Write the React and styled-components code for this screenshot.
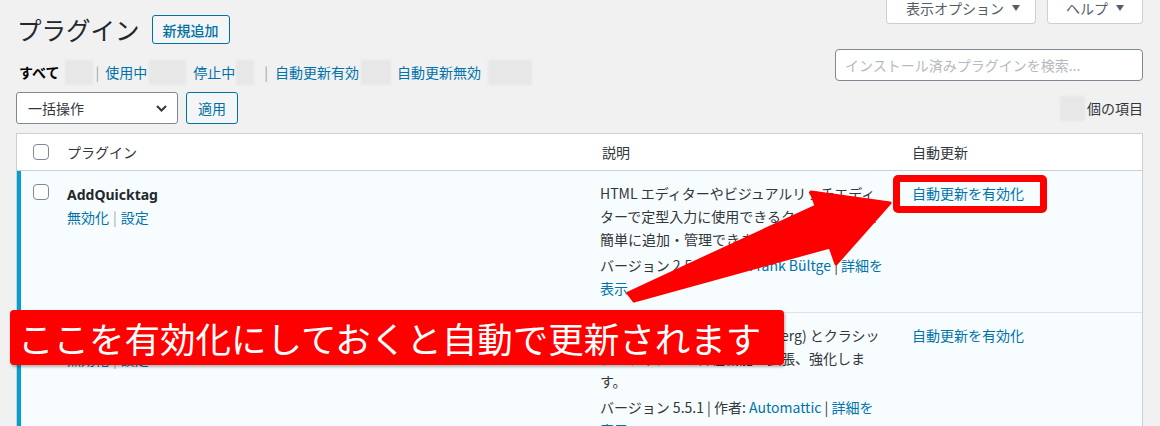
import React from "react";
import styled, { createGlobalStyle } from "styled-components";

const GlobalStyle = createGlobalStyle`
  html, body { margin: 0; padding: 0; background: #f1f1f1; }
  body {
    font-family: "Noto Sans", "Noto Sans CJK JP", sans-serif;
    font-size: 14px;
    color: #32373c;
  }
  * { box-sizing: border-box; }
`;

const Page = styled.div`
  position: relative;
  width: 1160px;
  height: 426px;
  overflow: hidden;
  padding: 0 17px 0 16px;
`;

const Top = styled.div`
  display: flex;
  justify-content: space-between;
  align-items: flex-start;
`;

const Left = styled.div`
  padding-top: 15px;
`;

const TitleRow = styled.div`
  display: flex;
  align-items: center;
  gap: 12px;
  height: 29px;
`;

const Title = styled.h1`
  margin: 0 0 0 1px;
  font-family: "Noto Sans CJK JP", sans-serif;
  font-size: 24.5px;
  font-weight: 400;
  line-height: 29px;
  color: #23282d;
`;

const OutlineButton = styled.button`
  height: ${(p) => p.$h || 29}px;
  padding: 0 ${(p) => p.$px || 10}px;
  border: 1px solid #0071a1;
  border-radius: 3px;
  background: #f3f5f6;
  color: #0071a1;
  font-family: "Noto Sans CJK JP", sans-serif;
  font-size: 14px;
  font-weight: ${(p) => p.$weight || 400};
  line-height: 1;
  display: inline-flex;
  align-items: center;
  cursor: pointer;
`;

const Filters = styled.div`
  display: flex;
  align-items: center;
  height: 20px;
  margin-top: 18px;
  padding-left: 3px;
  font-family: "Noto Sans CJK JP", sans-serif;
  font-size: 14px;
  line-height: 20px;
`;

const FilterLink = styled.a`
  margin-left: ${(p) => p.$ml || 0}px;
  color: ${(p) => (p.$current ? "#000" : "#0073aa")};
  font-weight: ${(p) => (p.$current ? 700 : 400)};
  text-decoration: none;
  white-space: nowrap;
`;

const Sep = styled.span`
  margin-left: ${(p) => p.$ml || 0}px;
  color: #a0a5aa;
`;

const Blur = styled.span`
  display: inline-block;
  width: ${(p) => p.$w}px;
  height: 25px;
  margin-left: ${(p) => p.$ml || 0}px;
  background: #e7e7e8;
  filter: blur(1px);
`;

const Right = styled.div`
  width: 308px;
  display: flex;
  flex-direction: column;
  align-items: flex-end;
`;

const ScreenMeta = styled.div`
  display: flex;
  gap: 11px;
`;

const MetaButton = styled.button`
  width: ${(p) => p.$w}px;
  height: 24px;
  padding: 0 0 8px ${(p) => p.$pl}px;
  display: flex;
  align-items: center;
  gap: 8px;
  background: #fff;
  border: 1px solid #ccd0d4;
  border-top: none;
  border-radius: 0 0 4px 4px;
  color: #555d66;
  font-family: "Noto Sans CJK JP", sans-serif;
  font-size: 14px;
  line-height: 16px;
`;

const Tri = styled.span`
  width: 0;
  height: 0;
  border-left: 4.5px solid transparent;
  border-right: 4.5px solid transparent;
  border-top: 6px solid #555d66;
`;

const Search = styled.input`
  width: 308px;
  height: 32px;
  margin-top: 25px;
  padding: 0 9px;
  border: 1px solid #7e8993;
  border-radius: 4px;
  background: #fff;
  font-family: "Noto Sans CJK JP", sans-serif;
  font-size: 14px;
  &::placeholder { color: #b6babf; }
`;

const Toolbar = styled.div`
  display: flex;
  justify-content: space-between;
  align-items: center;
  height: 32px;
  margin-top: 10px;
`;

const Group = styled.div`
  display: flex;
  align-items: center;
  gap: ${(p) => p.$gap || 0}px;
`;

const Select = styled.div`
  width: 162px;
  height: 32px;
  padding: 0 10px 0 11px;
  display: flex;
  align-items: center;
  justify-content: space-between;
  background: #fff;
  border: 1px solid #7e8993;
  border-radius: 3px;
  font-family: "Noto Sans CJK JP", sans-serif;
  font-size: 14px;
  color: #32373c;
`;

const Count = styled.span`
  font-family: "Noto Sans CJK JP", sans-serif;
  font-size: 14px;
  color: #32373c;
`;

const Table = styled.div`
  margin-top: 9px;
  border: 1px solid #ccd0d4;
  background: #fff;
`;

const HeadRow = styled.div`
  display: grid;
  grid-template-columns: 40px 533px 312px 1fr;
  align-items: center;
  height: 37px;
  border-bottom: 1px solid #ccd0d4;
  font-family: "Noto Sans CJK JP", sans-serif;
  font-size: 14px;
  color: #32373c;
`;

const HeadCell = styled.div`
  padding-left: ${(p) => p.$pl ?? 10}px;
  display: flex;
  align-items: center;
`;

const Row = styled.div`
  display: grid;
  grid-template-columns: 40px 533px 312px 1fr;
  background: #f7fcfe;
  border-bottom: 1px solid #e1e2e4;
`;

const CheckCell = styled.div`
  padding: 13px 0 0 16px;
  box-shadow: ${(p) => (p.$active ? "inset 4px 0 0 #00a0d2" : "none")};
`;

const Cell = styled.div`
  padding: 11px 10px 12px 10px;
  font-family: "Noto Sans CJK JP", sans-serif;
  font-size: 14px;
  line-height: 23px;
`;

const Box = styled.span`
  display: block;
  width: 16px;
  height: 16px;
  border: 1px solid #7e8993;
  border-radius: 4px;
  background: #fff;
`;

const PluginName = styled.strong`
  display: block;
  font-family: "Noto Sans", "Noto Sans CJK JP", sans-serif;
  font-weight: 700;
  color: #23282d;
  padding-top: 1px;
`;

const Actions = styled.div`
  color: #0073aa;
  font-size: 14px;
`;

const Link = styled.a`
  color: #0073aa;
  text-decoration: none;
`;

const Pipe = styled.span`
  color: #a0a5aa;
  margin: 0 4px;
`;

const Desc = styled.p`
  margin: ${(p) => (p.$gap ? "3px 0 0" : "0")};
  color: #32373c;
  white-space: nowrap;
`;

const Overlay = styled.div`
  position: absolute;
  inset: 0;
  pointer-events: none;
`;

const ArrowSvg = styled.svg`
  position: absolute;
  left: 0;
  top: 0;
`;

const Highlight = styled.div`
  position: absolute;
  left: 893px;
  top: 175px;
  width: 154px;
  height: 38px;
  border: 7px solid #ff0000;
  border-radius: 5px;
`;

const Callout = styled.div`
  position: absolute;
  left: 10px;
  top: 310px;
  height: 55px;
  padding: 0 23px 0 8px;
  display: flex;
  align-items: center;
  background: #ff0000;
  border-radius: 4px;
  box-shadow: 1px 2px 3px rgba(0, 0, 0, 0.3);
  color: #fff;
  font-family: "Noto Sans CJK JP", sans-serif;
  font-size: 35.5px;
  line-height: 1;
  white-space: nowrap;
`;

function Chevron() {
  return (
    <svg width="11" height="7" viewBox="0 0 11 7">
      <polyline points="1,1 5.5,5.5 10,1" fill="none" stroke="#32373c" strokeWidth="2" />
    </svg>
  );
}

export default function App() {
  return (
    <>
      <GlobalStyle />
      <Page>
        <Top>
          <Left>
            <TitleRow>
              <Title>プラグイン</Title>
              <OutlineButton $weight={500}>新規追加</OutlineButton>
            </TitleRow>
            <Filters>
              <FilterLink $current>すべて</FilterLink>
              <Blur $w={28} $ml={6} />
              <Sep $ml={2}>|</Sep>
              <FilterLink $ml={6}>使用中</FilterLink>
              <Blur $w={37} $ml={2} />
              <FilterLink $ml={7}>停止中</FilterLink>
              <Blur $w={18} $ml={1} />
              <Sep $ml={10}>|</Sep>
              <FilterLink $ml={7}>自動更新有効</FilterLink>
              <Blur $w={30} $ml={2} />
              <FilterLink $ml={6}>自動更新無効</FilterLink>
              <Blur $w={44} $ml={7} />
            </Filters>
          </Left>
          <Right>
            <ScreenMeta>
              <MetaButton $w={150} $pl={19}>
                表示オプション<Tri />
              </MetaButton>
              <MetaButton $w={96} $pl={18}>
                ヘルプ<Tri />
              </MetaButton>
            </ScreenMeta>
            <Search placeholder="インストール済みプラグインを検索..." />
          </Right>
        </Top>

        <Toolbar>
          <Group $gap={8}>
            <Select>
              一括操作
              <Chevron />
            </Select>
            <OutlineButton $h={32} $px={11}>適用</OutlineButton>
          </Group>
          <Group $gap={2}>
            <Blur $w={25} />
            <Count>個の項目</Count>
          </Group>
        </Toolbar>

        <Table>
          <HeadRow>
            <HeadCell $pl={16}>
              <Box />
            </HeadCell>
            <HeadCell>プラグイン</HeadCell>
            <HeadCell $pl={12}>説明</HeadCell>
            <HeadCell>自動更新</HeadCell>
          </HeadRow>

          <Row>
            <CheckCell $active>
              <Box />
            </CheckCell>
            <Cell>
              <PluginName>AddQuicktag</PluginName>
              <Actions>
                <Link>無効化</Link>
                <Pipe>|</Pipe>
                <Link>設定</Link>
              </Actions>
            </Cell>
            <Cell>
              <Desc>
                HTML エディターやビジュアルリッチエディ
                <br />
                ターで定型入力に使用できるクイックタグを
                <br />
                簡単に追加・管理できます。
              </Desc>
              <Desc $gap>
                バージョン 2.5.3 | 作者: <Link>Frank Bültge</Link> | <Link>詳細を</Link>
                <br />
                <Link>表示</Link>
              </Desc>
            </Cell>
            <Cell>
              <Link>自動更新を有効化</Link>
            </Cell>
          </Row>

          <Row>
            <CheckCell $active>
              <Box />
            </CheckCell>
            <Cell>
              <PluginName>Classic Editor</PluginName>
              <Actions>
                <Link>無効化</Link>
                <Pipe>|</Pipe>
                <Link>設定</Link>
              </Actions>
            </Cell>
            <Cell>
              <Desc>
                ブロックエディター (Gutenberg) とクラシッ
                <br />
                クエディターの各種機能を拡張、強化しま
                <br />
                す。
              </Desc>
              <Desc $gap>
                バージョン 5.5.1 | 作者: <Link>Automattic</Link> | <Link>詳細を</Link>
                <br />
                <Link>表示</Link>
              </Desc>
            </Cell>
            <Cell>
              <Link>自動更新を有効化</Link>
            </Cell>
          </Row>
        </Table>

        <Overlay>
          <ArrowSvg width="1160" height="426" viewBox="0 0 1160 426">
            <polygon
              points="628,293 816,206 811,192 890,203 836,264 830,247 634,301"
              fill="#ff0000"
              stroke="#ff0000"
              strokeWidth="3"
              strokeLinejoin="round"
            />
          </ArrowSvg>
          <Highlight />
          <Callout>ここを有効化にしておくと自動で更新されます</Callout>
        </Overlay>
      </Page>
    </>
  );
}
